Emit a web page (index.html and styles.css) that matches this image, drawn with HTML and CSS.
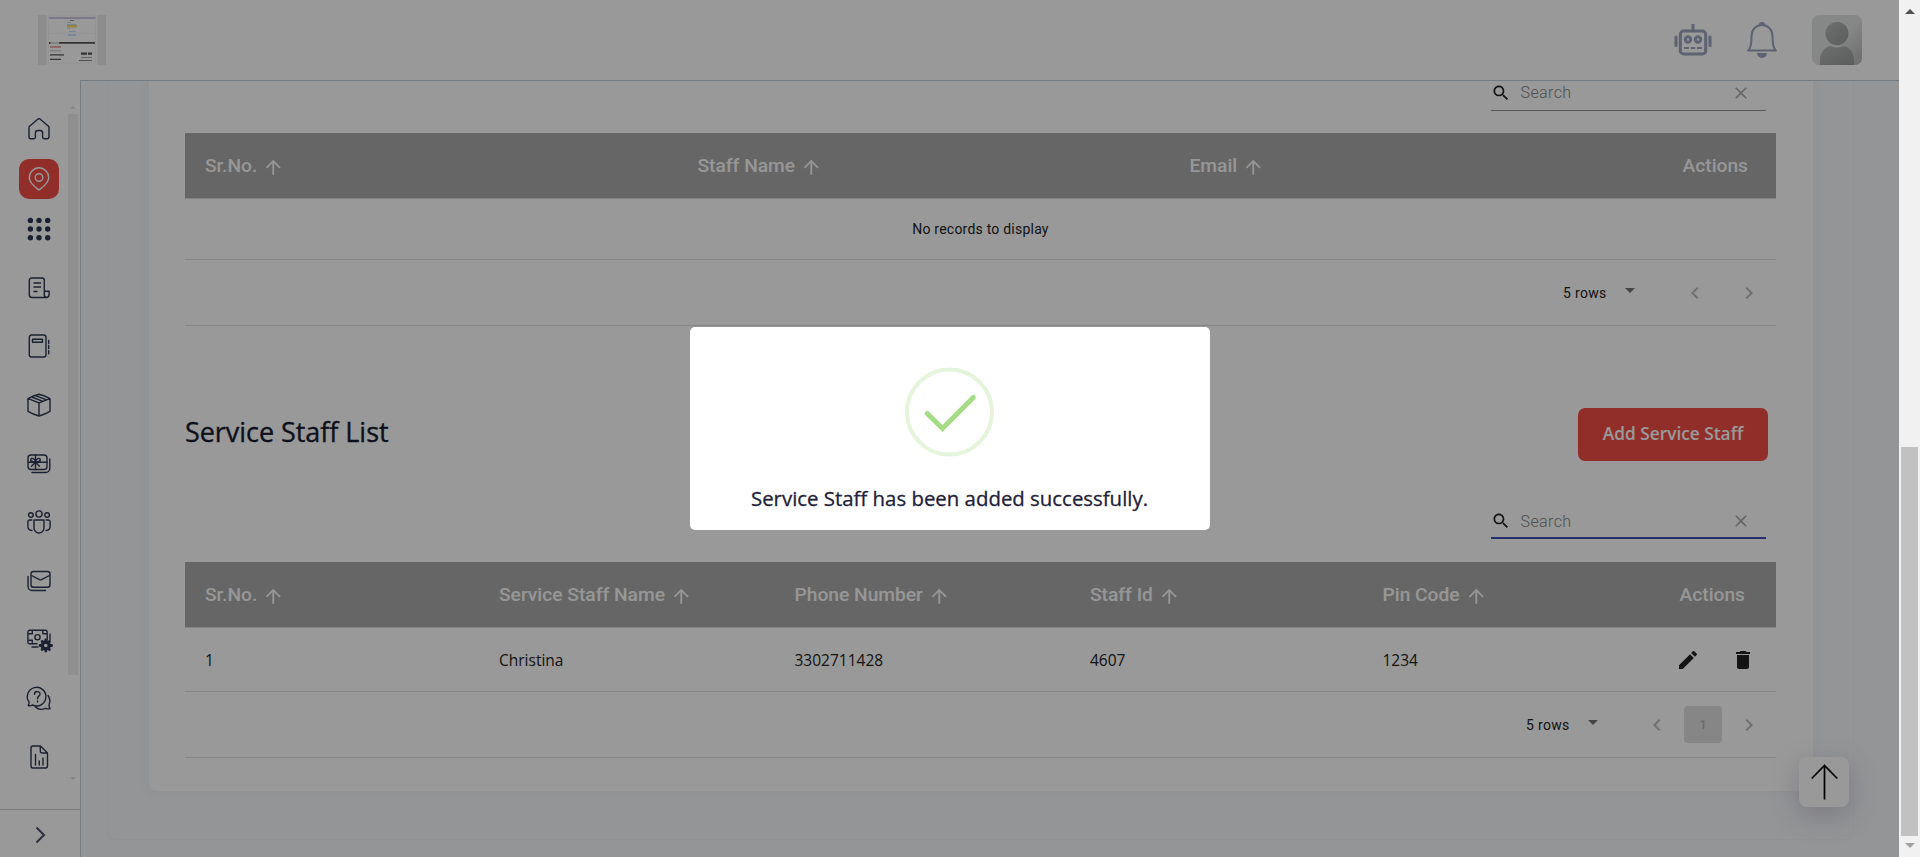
FILE: index.html
```html
<!DOCTYPE html>
<html lang="en">
<head>
<meta charset="utf-8">
<title>Service Staff List</title>
<link rel="stylesheet" href="styles.css">
</head>
<body>
<svg class="defs" width="0" height="0">
  <symbol id="up" viewBox="0 0 24 24"><path d="M4 12l1.41 1.41L11 7.83V20h2V7.83l5.58 5.59L20 12l-8-8-8 8z"/></symbol>
  <symbol id="search" viewBox="0 0 24 24"><path d="M15.5 14h-.79l-.28-.27C15.41 12.59 16 11.11 16 9.5 16 5.91 13.09 3 9.5 3S3 5.91 3 9.5 5.91 16 9.5 16c1.61 0 3.09-.59 4.23-1.57l.27.28v.79l5 4.99L20.49 19l-4.99-5zm-6 0C7.01 14 5 11.99 5 9.5S7.01 5 9.5 5 14 7.01 14 9.5 11.99 14 9.5 14z"/></symbol>
  <symbol id="clear" viewBox="0 0 24 24"><path d="M19 6.41L17.59 5 12 10.59 6.41 5 5 6.41 10.59 12 5 17.59 6.41 19 12 13.41 17.59 19 19 17.59 13.41 12z"/></symbol>
  <symbol id="caret" viewBox="0 0 24 24"><path d="M7 10l5 5 5-5z"/></symbol>
  <symbol id="left" viewBox="0 0 24 24"><path d="M15.41 7.41L14 6l-6 6 6 6 1.41-1.41L10.83 12z"/></symbol>
  <symbol id="right" viewBox="0 0 24 24"><path d="M10 6L8.59 7.41 13.17 12l-4.58 4.59L10 18l6-6z"/></symbol>
</svg>
<div class="screen">
  <div class="app">
    <header class="topbar">
      <svg class="logo" viewBox="0 0 68 50" width="68" height="50">
        <path fill="#ececec" d="M0 0h8.500v50H0zM59.500 0H68v50h-8.500z"/>
        <path fill="#fff" stroke="#efefef" stroke-width=".6" d="M10.500 1h47v47h-47z"/>
        <path fill="#cfc8e2" d="M11 2h46.500v2H11z"/>
        <path fill="#999" d="M32 5h4v1h-4z"/>
        <path fill="#c9dcf2" d="M29 7h4v1h-4zM29 13h3v1h-3zM31 16h7v1h-7zM30 19h8v2h-8zM29 9h9v1h-9z"/>
        <path fill="#f2dc6a" d="M29 10h10v2.500H29z"/>
        <path fill="#e8ecf2" d="M11 18h18v.6H11zM39 18h18v.6H39z"/>
        <path fill="#555" d="M11 27h1.500v2H11zM21 27h36v1.800H21z"/><path fill="#aaa" d="M13 27.500h8v1h-8z"/>
        <path fill="#d88" d="M12 31.200h11v1.400H12z"/><path fill="#bbb" d="M12 35.400h11v.9H12z"/>
        <path fill="#555" d="M12 39.200h14v1.200H12zM12 43.800h11V45H12zM43 37.500h6v2.300h-6zM50 37.500h4v2.300h-4z"/>
        <path fill="#888" d="M43 42.200h11v.9H43zM41 45h13v.9H41z"/>
      </svg>
      <div class="tools">
        <svg class="robot" width="38" height="32" viewBox="0 0 38 32" fill="none" stroke="#9da3be">
          <path stroke-width="3" d="M19 0v7"/>
          <rect x="6.300" y="7" width="25.400" height="23" rx="3.500" stroke-width="3"/>
          <path stroke-width="3" stroke-linecap="round" d="M2 13v8.500M36 13v8.500"/>
          <circle cx="14" cy="15.500" r="2.700" stroke-width="3"/><circle cx="24" cy="15.500" r="2.700" stroke-width="3"/>
          <path stroke-width="2" d="M10 24h5M16.800 24h4.400M23 24h5"/>
        </svg>
        <svg class="bell" width="30" height="36" viewBox="0 0 30 36">
          <path fill="none" stroke="#9da3be" stroke-width="2" stroke-linejoin="round" d="M1.200 28.500C4.500 25.500 4.500 20 4.500 14.500 4.500 7.500 9 3 15 3s10.500 4.500 10.500 11.500c0 5.500 0 11 3.300 14z"/>
          <path fill="#9da3be" d="M12 3a3 3 0 0 1 6 0zM10 31h10a5 5 0 0 1-10 0z"/>
        </svg>
        <svg class="avatar" width="50" height="50" viewBox="0 0 50 50">
          <defs>
            <linearGradient id="avbg" x1="0" y1="0" x2="1" y2="1"><stop offset="0" stop-color="#dfe2e1"/><stop offset=".5" stop-color="#e1e2e2"/><stop offset="1" stop-color="#b4b5b6"/></linearGradient>
            <linearGradient id="avfg" x1="0" y1="0" x2="1" y2="1"><stop offset="0" stop-color="#b8b9b9"/><stop offset="1" stop-color="#999a9b"/></linearGradient>
          </defs>
          <rect width="50" height="50" rx="7" fill="url(#avbg)"/>
          <circle cx="25" cy="18.500" r="11.500" fill="url(#avfg)"/>
          <path fill="url(#avfg)" d="M8 50v-5c0-7.500 5-14 11-14 4 2 8 2 12 0 6 0 11 6.500 11 14v5z"/>
        </svg>
      </div>
    </header>
    <div class="body">
      <aside class="side">
        <nav class="menu">
          <a class="item short"><svg viewBox="0 0 24 24"><path d="M2 9.800 10.700 2.300a2 2 0 0 1 2.600 0L22 9.800V20a1.700 1.700 0 0 1-1.700 1.700h-3a1.700 1.700 0 0 1-1.700-1.700v-4a2.500 2.500 0 0 0-2.500-2.500h-2.200a2.500 2.500 0 0 0-2.500 2.500v4a1.700 1.700 0 0 1-1.700 1.700h-3A1.700 1.700 0 0 1 2 20z"/></svg></a>
          <a class="item short"><span class="active"><svg viewBox="0 0 24 24"><path d="M12 23C8 20 2.300 16.500 2.300 10.500a9.700 9.700 0 0 1 19.400 0C21.700 16.500 16 20 12 23z"/><circle cx="12" cy="10.500" r="3.800"/></svg></span></a>
          <a class="item short"><svg class="solid" viewBox="0 0 24 24"><circle cx="3.400" cy="3.400" r="2.700"/><circle cx="12" cy="3.400" r="2.700"/><circle cx="20.700" cy="3.400" r="2.700"/><circle cx="3.400" cy="12" r="2.700"/><circle cx="12" cy="12" r="2.700"/><circle cx="20.700" cy="12" r="2.700"/><circle cx="3.400" cy="20.700" r="2.700"/><circle cx="12" cy="20.700" r="2.700"/><circle cx="20.700" cy="20.700" r="2.700"/></svg></a>
          <a class="item first"><svg viewBox="0 0 24 24"><path d="M17.300 15V4.200A2.200 2.200 0 0 0 15.100 2H4.500a2.200 2.200 0 0 0-2.200 2.200v14.500a2.800 2.800 0 0 0 2.800 2.800h14a3 3 0 0 0 3-3V15.300h-4.800v3.500a2.400 2.400 0 0 0 2 2.500M7 7h6.500M7 11h6.500M7 15.500h3"/></svg></a>
          <a class="item"><svg viewBox="0 0 24 24"><rect x="2.300" y="1" width="16.700" height="22" rx="2.200"/><path d="M5.500 5.300h10v2.900h-10zM21.700 6.500v3M21.700 11.500v3M21.700 16.800v3"/></svg></a>
          <a class="item"><svg viewBox="0 0 24 24"><path d="M12 1.200c3.500.8 7.500 2.300 11 4.300v12.800c-3.500 2-7 3.500-11 4.700-4-1.200-7.500-2.700-11-4.700V5.500c3.500-2 7.500-3.500 11-4.300zM1.200 5.700 12 9.800l10.800-4.100M12 9.800V23M4.800 4l10.500 4.200M8.500 2.600 19 6.700"/></svg></a>
          <a class="item"><svg viewBox="0 0 24 24"><rect x="1" y="3" width="19" height="14.500" rx="3"/><path d="M1 10.200h19M8.500 3v14.500M5 20.500h13.500a4.300 4.300 0 0 0 4.300-4.300V7M8.500 10.200C4 10 3.500 8.500 3.800 7.300 4.300 5.800 8 5.800 8.500 10.200zM8.500 10.200c4.500-.2 5-1.700 4.700-2.900-.5-1.500-4.200-1.500-4.700 2.900zM8.500 10.200l-4 4M8.500 10.200l4 4"/></svg></a>
          <a class="item"><svg viewBox="0 0 24 24"><circle cx="12" cy="4" r="3.100"/><circle cx="3.900" cy="5" r="2.300"/><circle cx="20.100" cy="5" r="2.300"/><path d="M7 10h10v8a5 5 0 0 1-10 0zM4.800 10H2.500A1.700 1.700 0 0 0 .9 11.700v4.800c0 2.300 1.500 3.700 4 4M19.200 10h2.300a1.700 1.700 0 0 1 1.600 1.700v4.800c0 2.300-1.500 3.700-4 4"/></svg></a>
          <a class="item"><svg viewBox="0 0 24 24"><rect x="4" y="2.500" width="19" height="15.800" rx="2.500"/><path d="M4.500 6.500l8 4.200a2.500 2.500 0 0 0 2 0l8-4.200M1 7.500v10A4 4 0 0 0 5 21.500h13.500"/></svg></a>
          <a class="item"><svg viewBox="0 0 24 24"><path d="M10 15.800H2.500A1.700 1.700 0 0 1 .9 14.200V4A1.700 1.700 0 0 1 2.500 2.300h16A1.700 1.700 0 0 1 20.200 4v8M23 6v6M5 19h6M5.300 2.300v3.500H1M15.800 2.300v3.500h4.300M5.300 15.800v-3.500H1"/><circle cx="10.500" cy="9.200" r="2.600"/><circle cx="18.800" cy="17.500" r="3.400" stroke-width="3.200"/><path stroke-width="2.800" d="M18.800 12v2M18.800 21v2M13 17.500h2M22.600 17.500h2M15.200 13.500l1 1.500M21.400 20l1 1.500M22.400 13.500l-1 1.500M16.200 20l-1 1.500"/></svg></a>
          <a class="item"><svg viewBox="0 0 24 24"><path d="M1.200 18.500c1.200-1.500 1-2.500.8-3.500A9.300 9.300 0 1 1 5.500 18c-1.300.7-2.800 1-4.300.5zM21 8.500c2.200 3 2.500 6 1 9.500 0 1.500.3 2.500 1 3.800-2 .3-3 0-4.500-.5-4 1.800-7.500 1.200-10-1.200M7.500 7.200c.3-3.700 5.800-3.300 5.500 0-.2 2-2.500 2-2.500 4.500M10.500 14v1"/></svg></a>
          <a class="item"><svg viewBox="0 0 24 24"><path d="M13.500 1H6A2 2 0 0 0 4 3v18a2 2 0 0 0 2 2h12.500a2 2 0 0 0 2-2V8zM13.300 1.200V6a2 2 0 0 0 2 2h5M8.500 9.500V20M12.300 16v4M16 13v7"/></svg></a>
        </nav>
        <div class="rail">
          <i class="tri tri-up"></i><i class="rail-thumb"></i><i class="tri tri-down"></i>
        </div>
        <div class="expand"><svg width="24" height="24" viewBox="0 0 24 24"><path d="M8.500 4.500l7.500 7.500-7.500 7.500"/></svg></div>
      </aside>
      <main class="main">
        <div class="frame">
          <section class="card">
            <div class="search">
              <svg class="s-ico"><use href="#search"/></svg><span class="s-text">Search</span><svg class="s-clear"><use href="#clear"/></svg>
            </div>
            <div class="table">
              <div class="row head cols-a">
                <span>Sr.No.<svg><use href="#up"/></svg></span><span>Staff Name<svg><use href="#up"/></svg></span><span>Email<svg><use href="#up"/></svg></span><span class="end">Actions</span>
              </div>
              <div class="empty">No records to display</div>
              <div class="pager">
                <span class="rows">5 rows</span><svg class="drop"><use href="#caret"/></svg>
                <svg class="prev"><use href="#left"/></svg><svg class="next"><use href="#right"/></svg>
              </div>
            </div>
            <div class="titlebar">
              <h2>Service Staff List</h2>
              <button class="add">Add Service Staff</button>
            </div>
            <div class="search focus">
              <svg class="s-ico"><use href="#search"/></svg><span class="s-text">Search</span><svg class="s-clear"><use href="#clear"/></svg>
            </div>
            <div class="table staff">
              <div class="row head cols-b">
                <span>Sr.No.<svg><use href="#up"/></svg></span><span>Service Staff Name<svg><use href="#up"/></svg></span><span>Phone Number<svg><use href="#up"/></svg></span><span>Staff Id<svg><use href="#up"/></svg></span><span>Pin Code<svg><use href="#up"/></svg></span><span class="end shift">Actions</span>
              </div>
              <div class="row data cols-b">
                <span>1</span><span>Christina</span><span>3302711428</span><span>4607</span><span>1234</span>
                <span class="acts">
                  <svg viewBox="0 0 24 24"><path d="M3 17.250V21h3.750L17.810 9.940l-3.750-3.750L3 17.250zM20.710 7.040c.39-.39.39-1.020 0-1.410l-2.340-2.340c-.39-.39-1.020-.39-1.410 0l-1.830 1.830 3.750 3.750 1.830-1.830z"/></svg>
                  <svg viewBox="0 0 24 24"><path d="M6 19c0 1.100.9 2 2 2h8c1.100 0 2-.9 2-2V7H6v12zM19 4h-3.500l-1-1h-5l-1 1H5v2h14V4z"/></svg>
                </span>
              </div>
              <div class="pager second">
                <span class="rows">5 rows</span><svg class="drop"><use href="#caret"/></svg>
                <svg class="prev"><use href="#left"/></svg><span class="page">1</span><svg class="next"><use href="#right"/></svg>
              </div>
            </div>
          </section>
        </div>
      </main>
    </div>
    <button class="totop"><svg width="28" height="36" viewBox="0 0 28 36"><path d="M14.500 35.500V1.500M1.700 14.500 14.500 1.500l12.800 13"/></svg></button>
    <div class="overlay">
      <div class="modal">
        <svg class="tick" width="90" height="90" viewBox="0 0 90 90">
          <circle cx="44.500" cy="45" r="42.500"/>
          <path d="M22.200 46.500 37.500 61.500 68.300 30.500"/>
        </svg>
        <p>Service Staff has been added successfully.</p>
      </div>
    </div>
  </div>
  <div class="scroll">
    <i class="tri dark-up"></i><i class="thumb"></i><i class="tri grey-down"></i>
  </div>
</div>
</body>
</html>
```
FILE: styles.css
```css
* { box-sizing: border-box; }
body { margin: 0; font-family: "Open Sans", "Noto Sans", sans-serif; }
svg { flex: none; display: block; }
.defs { position: absolute; }
.screen { display: flex; width: 1920px; height: 857px; overflow: hidden; }
.app { position: relative; width: 1899px; height: 857px; display: flex; flex-direction: column; background: #fff; }

.topbar { height: 80px; flex: none; padding: 0 37px 0 38px; display: flex; align-items: center; justify-content: space-between; }
.tools { display: flex; align-items: center; }
.bell { margin: 0 35px; }
.body { flex: 1; display: flex; min-height: 0; }

.side { width: 80px; flex: none; display: grid; grid-template-columns: 68px 12px; grid-template-rows: 729px 1fr; }
.menu { padding-top: 24px; padding-left: 10px; display: flex; flex-direction: column; }
.item { height: 58.700px; flex: none; display: flex; align-items: center; justify-content: center; }
.item.short { height: 50px; }
.item.first { margin-top: 4.400px; }
.item svg { width: 24px; height: 24px; overflow: visible; fill: none; stroke: #2f3852; stroke-width: 1.400; stroke-linejoin: round; stroke-linecap: round; }
.item svg.solid { fill: #2f3852; stroke: none; }
.active { width: 40px; height: 40px; border-radius: 10px; background: #f34e46; display: flex; align-items: center; justify-content: center; }
.item .active svg { stroke: #fff; }
.rail { padding: 26px 2px 0 0; display: flex; flex-direction: column; align-items: center; }
.rail-thumb { width: 10px; height: 561px; background: #efeff1; }
.tri { width: 0; height: 0; border: 3px solid transparent; flex: none; }
.tri-up { border-top: 0; border-bottom-color: #e0e0e0; margin-bottom: 5px; }
.tri-down { border-bottom: 0; border-top-color: #e0e0e0; margin-top: 102px; }
.expand { grid-column: 1 / 3; border-top: 1px solid #ccc; padding: 13px 0 0 28px; }
.expand path { fill: none; stroke: #4d5166; stroke-width: 2; }

.main { flex: 1; border-top: 1px solid #c3cfd8; border-left: 1px solid #c3cfd8; background: #f6f8fa; padding: 0 45px 17px 26px; }
.frame { height: 759px; border: 1px solid #f0f3f6; border-top: 0; border-radius: 0 0 8px 8px; padding: 0 40px 47px 41px; overflow: hidden; }
.card { height: 710px; background: #fff; border-radius: 0 0 8px 8px; padding: 0 37px 0 36px; box-shadow: 0 0 14px #edf0f4; display: flex; flex-direction: column; }

.search { width: 275px; height: 30px; margin-right: 10px; align-self: flex-end; flex: none; display: flex; align-items: center; padding-bottom: 6px; border-bottom: 1px solid #949494; }
.search.focus { height: 32px; margin-top: 46px; padding-bottom: 2px; border-bottom: 2px solid #3f51b5; }
.s-ico { width: 20px; height: 20px; fill: #222; }
.s-text { margin-left: 9.500px; flex: 1; font: 300 16px Roboto, sans-serif; color: #858585; letter-spacing: .4px; }
.s-clear { width: 20px; height: 20px; fill: #aaa; margin-right: 15px; }

.table { width: 1591px; flex: none; margin-top: 22px; }
.table.staff { margin-top: 23px; }
.row { display: grid; align-items: center; }
.row > span { padding-left: 20px; display: flex; align-items: center; white-space: nowrap; }
.cols-a { grid-template-columns: 492.500px 492px 1fr 150px; }
.cols-b { grid-template-columns: 294px 295.500px 295.500px 292.500px 1fr 150px; }
.head { height: 66px; background: #aaa; border-bottom: 1px solid #dcdcdc; font: 500 19.200px Roboto, sans-serif; color: #fbfbfb; }
.head svg { width: 22.500px; height: 22.500px; margin: 3px 0 0 5px; fill: #fbfbfb; }
.head .end { justify-content: flex-end; padding-right: 28px; }
.head .shift { padding-right: 31px; }
.empty { height: 61px; border-bottom: 1px solid #dedede; display: flex; align-items: center; justify-content: center; font: 400 14px Roboto, sans-serif; letter-spacing: .22px; color: #222; }
.data { height: 64px; border-bottom: 1px solid #dedede; font-size: 15.500px; color: #222; }
.data svg { width: 24px; height: 24px; fill: #222; }
.data .acts { gap: 30.500px; padding-left: 50px; }
.pager { height: 66px; border-bottom: 1px solid #dedede; display: flex; align-items: center; justify-content: flex-end; padding-right: 15.400px; }
.pager svg { width: 24px; height: 24px; fill: #bbb; }
.rows { font: 400 14px Roboto, sans-serif; letter-spacing: .3px; color: #222; }
.pager .drop { fill: #757575; margin-left: 11.500px; margin-top: -5px; }
.prev { margin-left: 41px; }
.next { margin-left: 29.600px; }
.second .prev { margin-left: 40px; }
.page { width: 38px; height: 37px; margin-left: 15px; border-radius: 4px; background: #e0e0e0; display: flex; align-items: center; justify-content: center; font: 500 13px Roboto, sans-serif; color: #b5b5b5; }
.second .next { margin-left: 14.600px; }

.titlebar { margin-top: 82px; padding-right: 8px; height: 53px; flex: none; display: flex; justify-content: space-between; align-items: center; }
.titlebar h2 { margin: -7px 0 0; font-size: 27px; font-weight: 500; color: #171c30; letter-spacing: -.05px; white-space: nowrap; -webkit-text-stroke: .35px #171c30; }
.add { width: 190px; height: 53px; padding: 0 0 2px; border: 0; border-radius: 7px; background: #f34e46; color: #fff; font: 600 17.300px "Open Sans", sans-serif; white-space: nowrap; }

.totop { position: absolute; left: 1799px; top: 757px; width: 50px; height: 50px; padding: 0; border: 0; border-radius: 8px; background: #fff; box-shadow: 0 8px 28px rgba(82, 72, 120, .26); display: flex; align-items: center; justify-content: center; }
.totop path { fill: none; stroke: #000; stroke-width: 1.700; }

.overlay { position: absolute; inset: 0; background: rgba(0, 0, 0, .4); display: flex; align-items: center; justify-content: center; }
.modal { width: 520px; height: 203px; border-radius: 5px; background: #fff; padding-top: 40px; display: flex; flex-direction: column; align-items: center; }
.tick { fill: none; stroke: #a5dc86; stroke-width: 5; stroke-linecap: round; }
.tick circle { stroke: #e4f5db; stroke-width: 4; }
.modal p { margin: 27px 0 0; font-size: 20.400px; line-height: 28px; font-weight: 500; color: #1e2139; white-space: nowrap; -webkit-text-stroke: .3px #1e2139; }

.scroll { width: 21px; background: #f1f1f1; display: flex; flex-direction: column; align-items: center; padding-top: 9px; }
.thumb { width: 17px; height: 389px; margin-top: 433px; background: #c1c1c1; flex: none; }
.dark-up { border-width: 5px; border-top: 0; border-bottom-color: #505050; }
.grey-down { border-width: 5px; border-bottom: 0; border-top-color: #a3a3a3; margin-top: 7px; }
```
